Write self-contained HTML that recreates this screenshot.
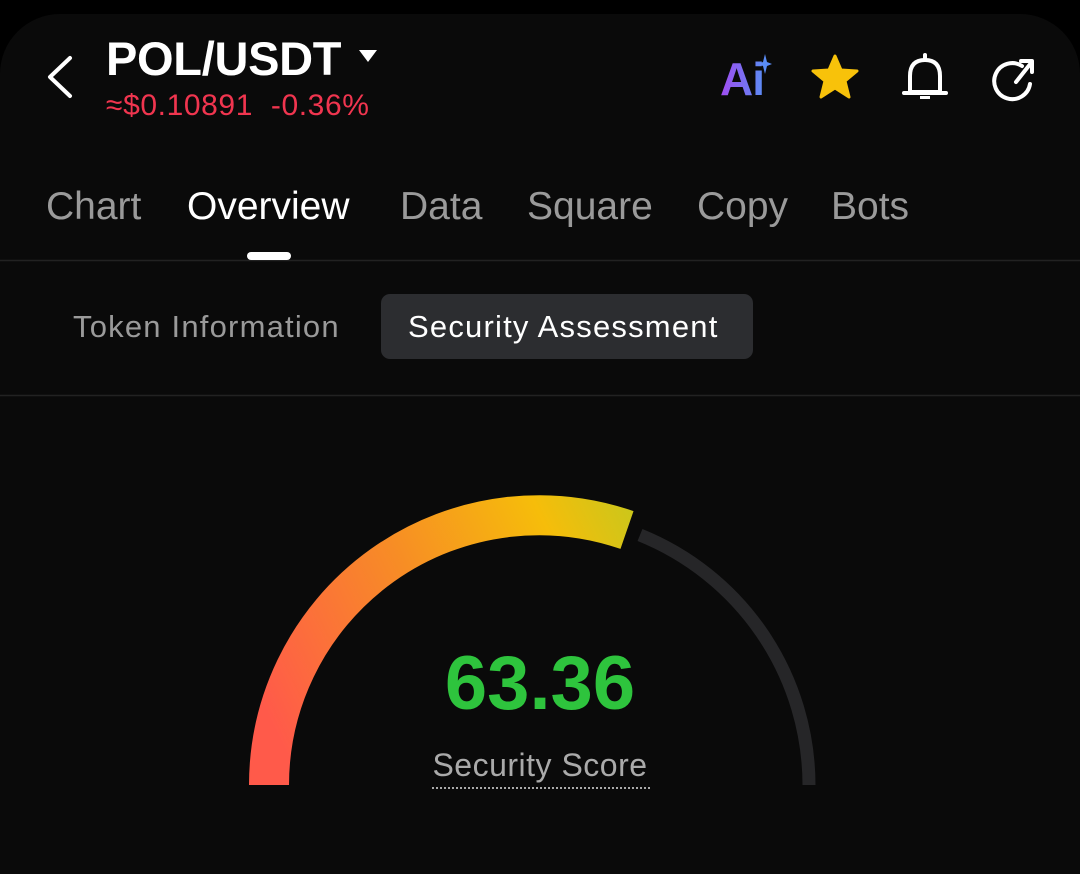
<!DOCTYPE html>
<html><head><meta charset="utf-8"><style>
*{margin:0;padding:0;box-sizing:border-box}
html,body{width:1080px;height:874px}
body{background:#000;overflow:hidden;font-family:"Liberation Sans",sans-serif;position:relative}
.panel{position:absolute;left:0;top:14px;width:1080px;height:860px;background:#0a0a0a;border-radius:60px 60px 0 0}
.abs{position:absolute;white-space:nowrap}
.title{left:106px;top:31px;color:#fff;font-size:47px;font-weight:bold;letter-spacing:-0.3px}
.price{left:106px;top:89px;color:#f0354f;font-size:30px;letter-spacing:0.6px}
.tab{top:185px;font-size:39px;color:#9a9a9a}
.sub{font-size:31px;letter-spacing:1.2px}
</style></head><body>
<div class="panel"></div>
<svg class="abs" style="left:0;top:0" width="1080" height="874">
<polyline points="70,58 50,77 70,96" fill="none" stroke="#fff" stroke-width="4" stroke-linecap="round" stroke-linejoin="round"/>
<polygon points="359,50 377,50 368,62" fill="#fff"/>
<polygon points="835,56 841,70 857,71 845,81 849,97 835,88 821,97 825,81 813,71 829,70" fill="#f8c20a" stroke="#f8c20a" stroke-width="3" stroke-linejoin="round"/>
<path d="M910,92 L910,76 Q910,60 925,60 Q940,60 940,76 L940,92 Z" fill="none" stroke="#fff" stroke-width="4" stroke-linejoin="round"/>
<line x1="904" y1="93" x2="946" y2="93" stroke="#fff" stroke-width="4" stroke-linecap="round"/>
<line x1="925" y1="55" x2="925" y2="60" stroke="#fff" stroke-width="4" stroke-linecap="round"/>
<rect x="920" y="96" width="10" height="3" fill="#fff"/>
<path d="M1022,66 A18,18 0 1 0 1030,84" fill="none" stroke="#fff" stroke-width="4" stroke-linecap="round"/>
<path d="M1016,82 L1031,63 M1021,61 L1032,61 L1032,72" fill="none" stroke="#fff" stroke-width="4" stroke-linecap="round" stroke-linejoin="round"/>
<path d="M765,54 L767,62 L772,64 L767,66 L765,74 L763,66 L758,64 L763,62 Z" fill="#5a8cf5"/>
<line x1="0" y1="260.5" x2="1080" y2="260.5" stroke="#222" stroke-width="1.5"/>
<line x1="0" y1="395.5" x2="1080" y2="395.5" stroke="#222" stroke-width="1.5"/>
<rect x="247" y="252" width="44" height="8" rx="4" fill="#fff"/>
<rect x="381" y="294" width="372" height="65" rx="9" fill="#2c2d30"/>
<defs><linearGradient id="g" gradientUnits="userSpaceOnUse" x1="260" y1="700" x2="635" y2="520">
<stop offset="0" stop-color="#ff5a4a"/><stop offset="0.45" stop-color="#f78d25"/><stop offset="0.8" stop-color="#f6bd0a"/><stop offset="1" stop-color="#cdc61a"/></linearGradient></defs>
<path d="M640,535 A270,270 0 0 1 809,785" fill="none" stroke="#262628" stroke-width="13"/>
<path d="M269,785 A270,270 0 0 1 627,530" fill="none" stroke="url(#g)" stroke-width="40"/>
<line x1="432" y1="788" x2="650" y2="788" stroke="#aaa" stroke-width="2" stroke-dasharray="2,2"/>
</svg>
<div class="abs title">POL/USDT</div>
<div class="abs price">≈$0.10891&nbsp; -0.36%</div>
<div class="abs" style="left:720px;top:52px;font-size:46px;font-weight:bold;letter-spacing:-1px;background:linear-gradient(90deg,#a24cf0,#5a8cf5);-webkit-background-clip:text;color:transparent">Ai</div>
<div class="abs tab" style="left:46px">Chart</div>
<div class="abs tab" style="left:187px;color:#fff">Overview</div>
<div class="abs tab" style="left:400px">Data</div>
<div class="abs tab" style="left:527px">Square</div>
<div class="abs tab" style="left:697px">Copy</div>
<div class="abs tab" style="left:831px">Bots</div>
<div class="abs sub" style="left:73px;top:309px;color:#9a9a9a">Token Information</div>
<div class="abs sub" style="left:408px;top:309px;color:#fff">Security Assessment</div>
<div class="abs" style="left:340px;width:400px;top:640px;text-align:center;color:#2ec43d;font-size:76px;font-weight:bold">63.36</div>
<div class="abs" style="left:340px;width:400px;top:747px;text-align:center;color:#aaa;font-size:32px;letter-spacing:0.5px">Security Score</div>
</body></html>
